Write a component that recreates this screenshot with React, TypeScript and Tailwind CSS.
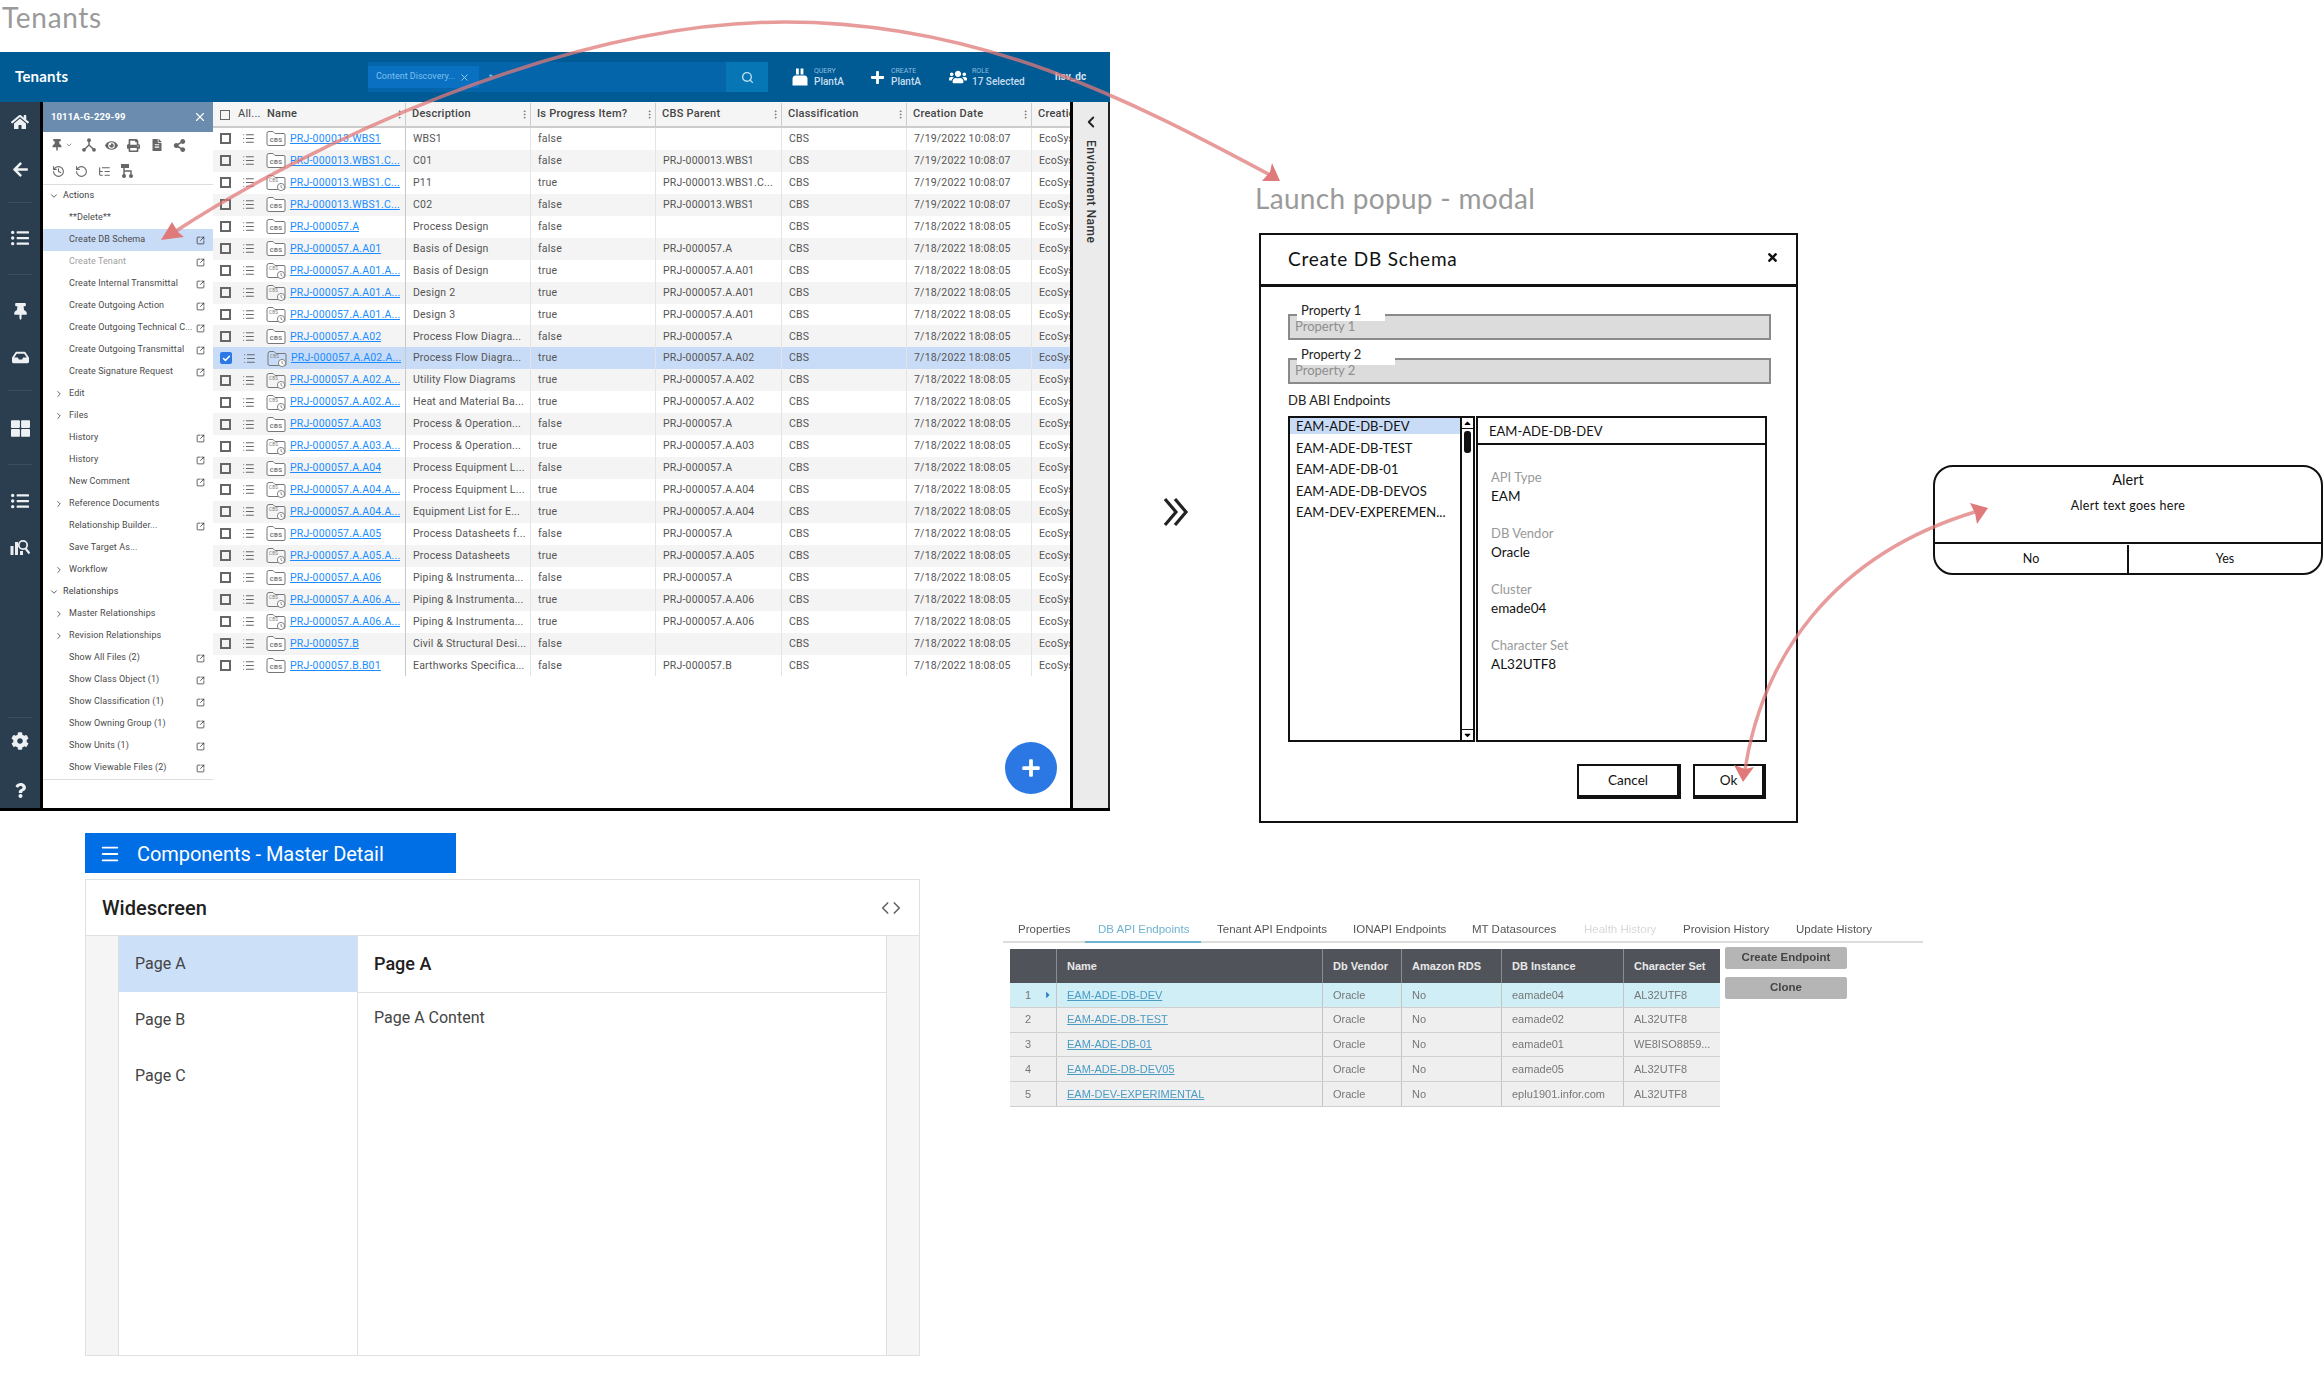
import React from "react";
import {
  ChevronDown,
  ChevronRight,
  ChevronLeft,
  Code,
  EllipsisVertical,
  List,
  Menu,
  Search,
  SquareArrowOutUpRight,
  X,
  Check,
  History,
  RotateCcw,
  ListTree,
} from "lucide-react";
import {
  FaHome,
  FaArrowLeft,
  FaListUl,
  FaThumbtack,
  FaInbox,
  FaThLarge,
  FaCog,
  FaQuestion,
  FaEye,
  FaPrint,
  FaFileAlt,
  FaShareAlt,
  FaPlus,
  FaUsers,
  FaTimes,
  FaCaretUp,
  FaCaretDown,
  FaCaretRight,
} from "react-icons/fa";

const D1 = "7/19/2022 10:08:07";
const D2 = "7/18/2022 18:08:05";

const rows: [string, string, string, string, string][] = [
  ["PRJ-000013.WBS1", "WBS1", "false", "", D1],
  ["PRJ-000013.WBS1.C...", "C01", "false", "PRJ-000013.WBS1", D1],
  ["PRJ-000013.WBS1.C...", "P11", "true", "PRJ-000013.WBS1.C...", D1],
  ["PRJ-000013.WBS1.C...", "C02", "false", "PRJ-000013.WBS1", D1],
  ["PRJ-000057.A", "Process Design", "false", "", D2],
  ["PRJ-000057.A.A01", "Basis of Design", "false", "PRJ-000057.A", D2],
  ["PRJ-000057.A.A01.A...", "Basis of Design", "true", "PRJ-000057.A.A01", D2],
  ["PRJ-000057.A.A01.A...", "Design 2", "true", "PRJ-000057.A.A01", D2],
  ["PRJ-000057.A.A01.A...", "Design 3", "true", "PRJ-000057.A.A01", D2],
  ["PRJ-000057.A.A02", "Process Flow Diagra...", "false", "PRJ-000057.A", D2],
  ["PRJ-000057.A.A02.A...", "Process Flow Diagra...", "true", "PRJ-000057.A.A02", D2],
  ["PRJ-000057.A.A02.A...", "Utility Flow Diagrams", "true", "PRJ-000057.A.A02", D2],
  ["PRJ-000057.A.A02.A...", "Heat and Material Ba...", "true", "PRJ-000057.A.A02", D2],
  ["PRJ-000057.A.A03", "Process & Operation...", "false", "PRJ-000057.A", D2],
  ["PRJ-000057.A.A03.A...", "Process & Operation...", "true", "PRJ-000057.A.A03", D2],
  ["PRJ-000057.A.A04", "Process Equipment L...", "false", "PRJ-000057.A", D2],
  ["PRJ-000057.A.A04.A...", "Process Equipment L...", "true", "PRJ-000057.A.A04", D2],
  ["PRJ-000057.A.A04.A...", "Equipment List for E...", "true", "PRJ-000057.A.A04", D2],
  ["PRJ-000057.A.A05", "Process Datasheets f...", "false", "PRJ-000057.A", D2],
  ["PRJ-000057.A.A05.A...", "Process Datasheets", "true", "PRJ-000057.A.A05", D2],
  ["PRJ-000057.A.A06", "Piping & Instrumenta...", "false", "PRJ-000057.A", D2],
  ["PRJ-000057.A.A06.A...", "Piping & Instrumenta...", "true", "PRJ-000057.A.A06", D2],
  ["PRJ-000057.A.A06.A...", "Piping & Instrumenta...", "true", "PRJ-000057.A.A06", D2],
  ["PRJ-000057.B", "Civil & Structural Desi...", "false", "", D2],
  ["PRJ-000057.B.B01", "Earthworks Specifica...", "false", "PRJ-000057.B", D2],
];

// kind: h = section heading, c = collapsed group, i = plain item
const menu: { t: string; k: "h" | "c" | "i"; ext?: boolean; cls?: string }[] = [
  { t: "Actions", k: "h" },
  { t: "**Delete**", k: "i" },
  { t: "Create DB Schema", k: "i", ext: true, cls: "bg-[#c9dcf7]" },
  { t: "Create Tenant", k: "i", ext: true, cls: "text-[#a0a0a0]" },
  { t: "Create Internal Transmittal", k: "i", ext: true },
  { t: "Create Outgoing Action", k: "i", ext: true },
  { t: "Create Outgoing Technical C...", k: "i", ext: true },
  { t: "Create Outgoing Transmittal", k: "i", ext: true },
  { t: "Create Signature Request", k: "i", ext: true },
  { t: "Edit", k: "c" },
  { t: "Files", k: "c" },
  { t: "History", k: "i", ext: true },
  { t: "History", k: "i", ext: true },
  { t: "New Comment", k: "i", ext: true },
  { t: "Reference Documents", k: "c" },
  { t: "Relationship Builder...", k: "i", ext: true },
  { t: "Save Target As...", k: "i" },
  { t: "Workflow", k: "c" },
  { t: "Relationships", k: "h" },
  { t: "Master Relationships", k: "c" },
  { t: "Revision Relationships", k: "c" },
  { t: "Show All Files (2)", k: "i", ext: true },
  { t: "Show Class Object (1)", k: "i", ext: true },
  { t: "Show Classification (1)", k: "i", ext: true },
  { t: "Show Owning Group (1)", k: "i", ext: true },
  { t: "Show Units (1)", k: "i", ext: true },
  { t: "Show Viewable Files (2)", k: "i", ext: true },
];

const endpoints = [
  ["1", "EAM-ADE-DB-DEV", "eamade04", "AL32UTF8"],
  ["2", "EAM-ADE-DB-TEST", "eamade02", "AL32UTF8"],
  ["3", "EAM-ADE-DB-01", "eamade01", "WE8ISO8859..."],
  ["4", "EAM-ADE-DB-DEV05", "eamade05", "AL32UTF8"],
  ["5", "EAM-DEV-EXPERIMENTAL", "eplu1901.infor.com", "AL32UTF8"],
];

function FolderIcon({ rev }: { rev: boolean }) {
  return (
    <svg width="20" height="17" viewBox="0 0 20 17" className="shrink-0">
      <path
        d="M1 3.5 Q1 1.5 3 1.5 H7 L9 3.5 H18 Q19 3.5 19 5 V14 Q19 15.5 18 15.5 H3 Q1 15.5 1 14 Z"
        fill={rev ? "none" : "#fff"}
        stroke="#777"
        strokeWidth="1"
      />
      {rev ? (
        <>
          <text x="3" y="7.5" fontSize="4.5" fill="#777" fontFamily="Roboto">CBS</text>
          <circle cx="15" cy="13" r="3.6" fill="#fff" stroke="#777" strokeWidth="0.9" />
          <path d="M15 11v2.2l1.4.8" fill="none" stroke="#777" strokeWidth="0.8" />
        </>
      ) : (
        <text x="10" y="12" fontSize="6.2" fontWeight="700" textAnchor="middle" fill="#777" fontFamily="Roboto">CBS</text>
      )}
    </svg>
  );
}

function HubIcon() {
  return (
    <svg width="14" height="14" viewBox="0 0 14 14" fill="#666">
      <circle cx="7" cy="2.2" r="1.9" />
      <circle cx="2" cy="11.8" r="1.9" />
      <circle cx="12" cy="11.8" r="1.9" />
      <path d="M7 2.2V7L2 11.8M7 7l5 4.8" fill="none" stroke="#666" strokeWidth="1.4" />
    </svg>
  );
}

function TreeIcon() {
  return (
    <svg width="13" height="14" viewBox="0 0 13 14" fill="none" stroke="#666" strokeWidth="1.4">
      <rect x="0.7" y="0.7" width="6.6" height="2.6" fill="#666" />
      <path d="M3 3.3V11M3 7h7v3" />
      <circle cx="3" cy="12" r="1.3" fill="#666" />
      <circle cx="10" cy="12" r="1.3" fill="#666" />
    </svg>
  );
}

function QueryIcon() {
  return (
    <svg width="16" height="18" viewBox="0 0 16 18" fill="#fff">
      <rect x="4" y="0.5" width="2.8" height="6" />
      <rect x="8.6" y="0.5" width="2.8" height="6" />
      <path d="M3 7.5 H13 Q15.5 8 15.5 11 V17.5 H0.5 V11 Q0.5 8 3 7.5 Z" />
    </svg>
  );
}

function AnalyticsIcon() {
  return (
    <svg width="20" height="16" viewBox="0 0 20 16" fill="#e9edf1">
      <rect x="0.5" y="7" width="3" height="9" />
      <rect x="5" y="3" width="3" height="13" />
      <circle cx="13" cy="6" r="4.2" fill="none" stroke="#e9edf1" strokeWidth="1.8" />
      <path d="M15.5 9.5 L19.5 14.5" stroke="#e9edf1" strokeWidth="2.2" />
      <rect x="10" y="12" width="3" height="4" />
    </svg>
  );
}

function AppWindow() {
  return (
    <div className="absolute left-0 top-[52px] flex h-[759px] w-[1110px] flex-col border-b-[3px] border-black">
      <header className="flex h-[50px] shrink-0 items-center bg-[#005a94] text-white">
        <div className="mb-[2px] w-[368px] pl-[15px] font-['Lato',sans-serif] text-[15px] font-bold tracking-[0.2px]">Tenants</div>
        <div className="flex h-[30px] w-[400px] items-center bg-[#0465aa]">
          <div className="flex h-[22px] w-[111px] items-center justify-between bg-[#0a70c2] pl-[8px] pr-[9px] text-[9px] text-[#7fc0ee]">
            Content Discovery...
            <X size={11} className="text-[#9fd0f2]" />
          </div>
          <span className="ml-[10px] text-[8px] text-[#9fd0f2]">*</span>
          <div className="ml-auto flex h-[30px] w-[42px] items-center justify-center bg-[#0676b4]">
            <Search size={13} strokeWidth={2.5} className="text-[#bfe2f5]" />
          </div>
        </div>
        <div className="ml-[24px] flex w-[78px] items-center gap-[6px]">
          <QueryIcon />
          <div className="leading-none">
            <div className="text-[7px] text-[#8fbfe0]">QUERY</div>
            <div className="mt-[2px] text-[10px] font-medium text-[#c7dff0]">PlantA</div>
          </div>
        </div>
        <div className="flex w-[79px] items-center gap-[6px]">
          <FaPlus size={15} />
          <div className="leading-none">
            <div className="text-[7px] text-[#8fbfe0]">CREATE</div>
            <div className="mt-[2px] text-[10px] font-medium text-[#c7dff0]">PlantA</div>
          </div>
        </div>
        <div className="flex w-[106px] items-center gap-[5px]">
          <FaUsers size={18} />
          <div className="leading-none">
            <div className="text-[7px] text-[#8fbfe0]">ROLE</div>
            <div className="mt-[2px] text-[10px] font-medium text-[#c7dff0]">17 Selected</div>
          </div>
        </div>
        <div className="mb-[2px] text-[10px] font-bold text-[#d7e6f2]">hsv_dc</div>
      </header>

      <div className="flex min-h-0 flex-1">
        <Rail />
        <div className="w-[3px] shrink-0 bg-black" />
        <SidePanel />
        <DataGrid />
        <div className="w-[3px] shrink-0 bg-black" />
        <div className="flex w-[37px] shrink-0 flex-col items-center border-r-[2px] border-[#222] bg-[#ebebeb] pt-[11px]">
          <ChevronLeft size={18} strokeWidth={2.5} className="text-[#222]" />
          <div className="mt-[9px] text-[12px] font-medium tracking-[0.5px] text-[#333] [writing-mode:vertical-rl]">Enviorment Name</div>
        </div>
      </div>
    </div>
  );
}

function Rail() {
  const ic = "mx-auto shrink-0";
  return (
    <nav className="flex w-[40px] shrink-0 flex-col bg-[#2b3e50] text-[#eef1f4]">
      <FaHome size={18} className={`${ic} mt-[11px]`} />
      <FaArrowLeft size={17} className={`${ic} mt-[30px]`} />
      <div className="mx-[8px] mt-[24px] border-t border-[#3a4e61]" />
      <FaListUl size={18} className={`${ic} mt-[26px]`} />
      <div className="mx-[8px] mt-[27px] border-t border-[#3a4e61]" />
      <FaThumbtack size={17} className={`${ic} mt-[28px]`} />
      <FaInbox size={17} className={`${ic} mt-[29px]`} />
      <div className="mx-[8px] mt-[24px] border-t border-[#3a4e61]" />
      <FaThLarge size={19} className={`${ic} mt-[28px]`} />
      <div className="mx-[8px] mt-[26px] border-t border-[#3a4e61]" />
      <FaListUl size={18} className={`${ic} mt-[27px]`} />
      <div className={`${ic} mt-[29px]`}>
        <AnalyticsIcon />
      </div>
      <div className="mx-[8px] mt-[162px] border-t border-[#3a4e61]" />
      <FaCog size={18} className={`${ic} mt-[14px]`} />
      <FaQuestion size={15} className={`${ic} mt-[33px]`} />
    </nav>
  );
}

function SidePanel() {
  return (
    <aside className="flex w-[170px] shrink-0 flex-col bg-white text-[9px] tracking-[0.1px] text-[#4a4a4a]">
      <div className="flex h-[30px] shrink-0 items-center justify-between bg-[#6b8cae] pl-[8px] pr-[6px] text-[9.5px] font-bold text-white">
        1011A-G-229-99
        <X size={14} />
      </div>
      <div className="flex h-[53px] shrink-0 flex-col justify-center gap-[12px] border-b border-[#ddd] pl-[8px] text-[#666]">
        <div className="flex h-[14px] items-center gap-[9px]">
          <div className="flex items-center gap-[2px]">
            <FaThumbtack size={12} />
            <ChevronDown size={8} />
          </div>
          <HubIcon />
          <FaEye size={13} />
          <FaPrint size={13} />
          <FaFileAlt size={12} className="ml-[2px]" />
          <FaShareAlt size={13} className="ml-[1px]" />
        </div>
        <div className="flex h-[14px] items-center gap-[10px] pl-[1px]">
          <History size={13} />
          <RotateCcw size={13} />
          <ListTree size={13} />
          <TreeIcon />
        </div>
      </div>
      {menu.map((m, i) => (
        <div key={i} className={`flex h-[22px] shrink-0 items-center pr-[8px] ${m.cls ?? ""}`}>
          {m.k === "h" && <ChevronDown size={10} className="ml-[6px] mr-[4px] shrink-0 text-[#444]" />}
          {m.k === "c" && <ChevronRight size={10} className="ml-[11px] mr-[5px] shrink-0 text-[#444]" />}
          {m.k === "i" && <span className="w-[26px] shrink-0" />}
          <span className={m.k === "h" ? "text-[#3b3b3b]" : ""}>{m.t}</span>
          {m.ext && <SquareArrowOutUpRight size={9} strokeWidth={2} className="ml-auto shrink-0 text-[#333]" />}
        </div>
      ))}
      <div className="border-t border-[#ddd]" />
    </aside>
  );
}

const gridCols = "grid grid-cols-[193px_125px_125px_126px_125px_125px_41px]";

function HeadCell({ label, last }: { label: string; last?: boolean }) {
  return (
    <div className={`flex items-center justify-between overflow-hidden whitespace-nowrap pl-[6px] ${last ? "" : "border-r border-[#ccc]"}`}>
      {label}
      {!last && <EllipsisVertical size={11} className="shrink-0 text-[#777]" />}
    </div>
  );
}

function DataGrid() {
  return (
    <main className="relative min-w-0 flex-1 overflow-hidden bg-white text-[10.5px] text-[#555]">
      <div className={`${gridCols} h-[26px] border-b-[2px] border-[#ccc] bg-[#f5f5f5] pt-[1px] text-[11px] font-medium tracking-[0.25px] text-[#444]`}>
        <div className="flex items-center justify-between border-r border-[#ccc] pl-[7px]">
          <div className="flex items-center">
            <span className="h-[10px] w-[10px] border-[1.5px] border-[#666]" />
            <span className="ml-[8px] w-[29px] font-normal">All...</span>
            <span>Name</span>
          </div>
          <EllipsisVertical size={11} className="text-[#777]" />
        </div>
        <HeadCell label="Description" />
        <HeadCell label="Is Progress Item?" />
        <HeadCell label="CBS Parent" />
        <HeadCell label="Classification" />
        <HeadCell label="Creation Date" />
        <HeadCell label="Creation Source" last />
      </div>
      {rows.map((r, i) => {
        const sel = i === 10;
        const bg = sel ? "bg-[#c9dcf7]" : i % 2 === 1 ? "bg-[#f4f4f4]" : "bg-white";
        return (
          <div key={i} className={`${gridCols} h-[21.94px] tracking-[0.2px] ${bg}`}>
            <div className="flex items-center border-r border-[#c8c8c8] pl-[7px]">
              {sel ? (
                <span className="flex h-[12px] w-[12px] items-center justify-center rounded-[2px] bg-[#2b78e4] text-white">
                  <Check size={9} strokeWidth={4} />
                </span>
              ) : (
                <span className="h-[11px] w-[11px] border-[2px] border-[#666]" />
              )}
              <List size={13} className="ml-[11px] shrink-0 text-[#666]" />
              <span className="ml-[11px] flex">
                <FolderIcon rev={r[2] === "true"} />
              </span>
              <a className="ml-[4px] truncate text-[#1a8cff] underline">{r[0]}</a>
            </div>
            <div className="flex items-center truncate border-r border-[#e4e4e4] pl-[7px]">{r[1]}</div>
            <div className="flex items-center border-r border-[#e4e4e4] pl-[7px]">{r[2]}</div>
            <div className="flex items-center truncate border-r border-[#e4e4e4] pl-[7px]">{r[3]}</div>
            <div className="flex items-center border-r border-[#e4e4e4] pl-[7px]">CBS</div>
            <div className="flex items-center border-r border-[#e4e4e4] pl-[7px]">{r[4]}</div>
            <div className="flex items-center overflow-hidden pl-[7px]">EcoSys</div>
          </div>
        );
      })}
      <button className="absolute left-[792px] top-[640px] flex h-[52px] w-[52px] items-center justify-center rounded-full bg-[#2b78e4] text-white">
        <FaPlus size={20} />
      </button>
    </main>
  );
}

function SketchField({ label, labelW }: { label: string; labelW: string }) {
  return (
    <div className="relative h-[26px] border-[2px] border-[#8a8a8a] bg-[#dcdcdc] pl-[5px] text-[13px] leading-[20px] text-[#8e8e8e]">
      {label}
      <span className={`absolute left-[7px] top-[-13px] h-[18px] bg-white pl-[4px] text-[13px] leading-[14px] text-[#222] ${labelW}`}>{label}</span>
    </div>
  );
}

function Modal() {
  const fields = [
    ["API Type", "EAM"],
    ["DB Vendor", "Oracle"],
    ["Cluster", "emade04"],
    ["Character Set", "AL32UTF8"],
  ];
  return (
    <div className="absolute left-[1259px] top-[233px] flex h-[590px] w-[539px] flex-col border-[2px] border-[#111] bg-white font-['Lato',sans-serif]">
      <div className="flex h-[52px] shrink-0 items-center justify-between border-b-[3px] border-[#111] pl-[27px] pr-[17px] text-[#111]">
        <span className="text-[19px] tracking-[0.8px]">Create DB Schema</span>
        <FaTimes size={13} className="mb-[4px]" />
      </div>
      <div className="flex flex-1 flex-col pl-[27px] pr-[25px] pt-[27px]">
        <SketchField label="Property 1" labelW="w-[88px]" />
        <div className="h-[18px]" />
        <SketchField label="Property 2" labelW="w-[98px]" />
        <div className="mt-[9px] text-[13px] leading-[14px] text-[#222]">DB ABI Endpoints</div>
        <div className="mt-[9px] flex h-[326px] w-[479px]">
          <div className="flex w-[187px] border-[2px] border-[#111]">
            <ul className="min-w-0 flex-1 text-[13px] text-[#111]">
              {["EAM-ADE-DB-DEV", "EAM-ADE-DB-TEST", "EAM-ADE-DB-01", "EAM-ADE-DB-DEVOS", "EAM-DEV-EXPEREMEN..."].map((t, i) => (
                <li key={t} className={`whitespace-nowrap pl-[6px] ${i === 0 ? "h-[16px] bg-[#c9dcf7] leading-[17px]" : "mt-[5.2px] h-[16px] leading-[18px]"}`}>{t}</li>
              ))}
            </ul>
            <div className="flex w-[13px] shrink-0 flex-col items-center border-l-[2px] border-[#111]">
              <FaCaretUp size={11} className="border-b border-[#111]" />
              <span className="mt-[2px] h-[22px] w-[7px] rounded-[3px] bg-[#111]" />
              <FaCaretDown size={11} className="mt-auto border-t border-[#111]" />
            </div>
          </div>
          <div className="ml-[1px] flex flex-1 flex-col border-[2px] border-[#111]">
            <div className="flex h-[27px] shrink-0 items-center border-b-[2px] border-[#111] pl-[11px] pt-[2px] text-[13px] text-[#111]">EAM-ADE-DB-DEV</div>
            <dl className="flex flex-col gap-[21px] pl-[13px] pt-[24px] text-[13px] leading-[16px]">
              {fields.map(([k, v]) => (
                <div key={k}>
                  <dt className="text-[#999]">{k}</dt>
                  <dd className="mt-[3px] text-[13.5px] text-[#111]">{v}</dd>
                </div>
              ))}
            </dl>
          </div>
        </div>
        <div className="mt-[22px] flex w-[478px] justify-end gap-[12px] text-[13.5px] text-[#111]">
          <button className="h-[35px] w-[104px] border-[2px] border-b-[4px] border-r-[4px] border-[#111]">Cancel</button>
          <button className="h-[35px] w-[73px] border-[2px] border-b-[4px] border-r-[4px] border-[#111]">Ok</button>
        </div>
      </div>
    </div>
  );
}

function Alert() {
  return (
    <div className="absolute left-[1933px] top-[465px] flex h-[110px] w-[390px] flex-col overflow-hidden rounded-[20px] border-[2px] border-[#111] bg-white font-['Lato',sans-serif] text-[#111]">
      <div className="flex flex-1 flex-col items-center pt-[4px]">
        <div className="text-[14.5px] leading-[18px]">Alert</div>
        <div className="mt-[9px] text-[12.5px] leading-[16px] tracking-[0.3px]">Alert text goes here</div>
      </div>
      <div className="flex h-[31px] shrink-0 border-t-[2px] border-[#111] pt-[1px] text-[12.5px]">
        <div className="flex w-[194px] shrink-0 items-center justify-center border-r-[2px] border-[#111]">No</div>
        <div className="flex flex-1 items-center justify-center">Yes</div>
      </div>
    </div>
  );
}

function MasterDetail() {
  return (
    <div className="absolute left-[85px] top-[833px] flex h-[523px] w-[835px] flex-col">
      <div className="flex h-[40px] w-[371px] shrink-0 items-center bg-[#006fe6] pl-[14px] pt-[1px] text-[20px] text-white">
        <Menu size={22} strokeWidth={2} />
        <span className="ml-[16px] tracking-[-0.05px]">Components - Master Detail</span>
      </div>
      <div className="mt-[6px] flex min-h-0 flex-1 flex-col border border-[#e0e0e0] bg-white">
        <div className="flex h-[56px] shrink-0 items-center justify-between border-b border-[#e0e0e0] pl-[16px] pr-[18px]">
          <span className="text-[20px] font-medium text-[#212121]">Widescreen</span>
          <Code size={20} className="text-[#666]" />
        </div>
        <div className="flex min-h-0 flex-1 bg-[#f5f5f5] px-[32px]">
          <div className="w-[240px] shrink-0 border-x border-[#e0e0e0] bg-white text-[16px] text-[#444]">
            {["Page A", "Page B", "Page C"].map((p, i) => (
              <div key={p} className={`flex h-[56px] items-center pl-[16px] ${i === 0 ? "bg-[#cce0f8]" : ""}`}>{p}</div>
            ))}
          </div>
          <div className="flex-1 border-r border-[#e0e0e0] bg-white">
            <div className="flex h-[57px] items-center border-b border-[#e0e0e0] pb-[2px] pl-[16px] text-[18px] font-medium text-[#212121]">Page A</div>
            <div className="pl-[16px] pt-[13px] text-[16px] text-[#444]">Page A Content</div>
          </div>
        </div>
      </div>
    </div>
  );
}

const tabs: [string, string][] = [
  ["Properties", "w-[80px]"],
  ["DB API Endpoints", "w-[119px]"],
  ["Tenant API Endpoints", "w-[136px]"],
  ["IONAPI Endpoints", "w-[119px]"],
  ["MT Datasources", "w-[112px]"],
  ["Health History", "w-[99px]"],
  ["Provision History", "w-[113px]"],
  ["Update History", "w-[100px]"],
];

const epCols = "grid grid-cols-[47px_266px_79px_100px_122px_96px]";

function EndpointsShot() {
  return (
    <div className="absolute left-[1003px] top-[918px] w-[920px] font-['Liberation_Sans',sans-serif] blur-[0.5px]">
      <div className="flex h-[25px] border-b-[2px] border-[#ddd] pl-[15px] text-[11.5px] text-[#555]">
        {tabs.map(([t, w], i) => (
          <div
            key={t}
            className={`${w} relative pt-[3px] ${i === 1 ? "text-[#6fb3d0]" : ""} ${i === 5 ? "text-[#d8d8d8]" : ""}`}
          >
            {t}
            {i === 1 && <span className="absolute bottom-[-2px] left-[-13px] h-[2px] w-[116px] bg-[#6fb3d0]" />}
          </div>
        ))}
      </div>
      <div className="ml-[7px] mt-[6px] flex items-start">
        <div className="w-[710px]">
          <div className={`${epCols} h-[34px] bg-[#50535a] text-[11px] font-bold text-[#e8e8e8]`}>
            {["", "Name", "Db Vendor", "Amazon RDS", "DB Instance", "Character Set"].map((h, i) => (
              <div key={i} className="flex items-center border-r border-[#8b8d92] pl-[10px] last:border-r-0">{h}</div>
            ))}
          </div>
          {endpoints.map((e, i) => (
            <div key={e[0]} className={`${epCols} h-[24.8px] border-b border-[#cfcfcf] text-[11px] text-[#777] ${i === 0 ? "bg-[#cfeef5]" : "bg-[#efefef]"}`}>
              <div className="flex items-center justify-between border-r border-[#c4c4c4] pl-[15px] pr-[3px]">
                {e[0]}
                {i === 0 && <FaCaretRight size={10} className="text-[#2b7fc4]" />}
              </div>
              <div className="flex items-center border-r border-[#c4c4c4] pl-[10px] text-[#4a9cc5] underline">{e[1]}</div>
              <div className="flex items-center border-r border-[#c4c4c4] pl-[10px]">Oracle</div>
              <div className="flex items-center border-r border-[#c4c4c4] pl-[10px]">No</div>
              <div className="flex items-center border-r border-[#c4c4c4] pl-[10px]">{e[2]}</div>
              <div className="flex items-center pl-[10px]">{e[3]}</div>
            </div>
          ))}
        </div>
        <div className="ml-[5px] flex w-[122px] flex-col gap-[8px] text-[11.5px] font-bold text-[#444]">
          <button className="-mt-[2px] h-[22px] rounded-[2px] bg-[#b5b5b5]">Create Endpoint</button>
          <button className="h-[22px] rounded-[2px] bg-[#b5b5b5]">Clone</button>
        </div>
      </div>
    </div>
  );
}

function Arrows() {
  return (
    <svg className="pointer-events-none absolute inset-0" width="2324" height="1379" viewBox="0 0 2324 1379" fill="none">
      <g opacity="0.75" stroke="#e07a7a" strokeWidth="3.5" strokeLinecap="round">
        <path d="M176 231 C 300 150, 560 22, 785 22 C 980 22, 1130 100, 1272 176" />
        <path d="M1745 770 C 1762 660, 1830 555, 1978 511" />
      </g>
      <g fill="#e07a7a">
        <path d="M161 240 L172 222 L178 232 L184 237 Z" />
        <path d="M1280 181 L1262 181 L1270 172 L1272 163 Z" />
        <path d="M1743 782 L1734 765 L1745 769 L1754 767 Z" />
        <path d="M1988 508 L1977 524 L1975 513 L1970 503 Z" />
      </g>
    </svg>
  );
}

function DoubleChevron() {
  return (
    <svg className="absolute left-[1163px] top-[497px]" width="27" height="30" viewBox="0 0 27 30" fill="none" stroke="#222" strokeWidth="3.2">
      <path d="M2 2 L13 15 L2 28" />
      <path d="M12 2 L23 15 L12 28" />
    </svg>
  );
}

export default function App() {
  return (
    <div className="relative h-[1379px] w-[2324px] overflow-hidden bg-white font-[Roboto,sans-serif]">
      <h1 className="absolute left-[2px] top-0 font-['Lato',sans-serif] text-[28px] font-normal leading-[34px] tracking-[0.7px] text-[#9a9a9a]">Tenants</h1>
      <AppWindow />
      <h2 className="absolute left-[1255px] top-[180px] font-['Lato',sans-serif] text-[28px] font-normal leading-[36px] tracking-[0.3px] text-[#9a9a9a]">Launch popup - modal</h2>
      <Modal />
      <DoubleChevron />
      <Alert />
      <MasterDetail />
      <EndpointsShot />
      <Arrows />
    </div>
  );
}
